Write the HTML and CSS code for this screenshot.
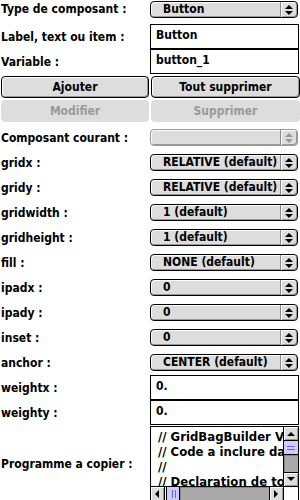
FILE: index.html
```
<!DOCTYPE html>
<html lang="fr">
<head>
	<meta charset="UTF-8">
	<title>GridBagBuilder</title>
	<link rel="stylesheet" href="styles.css">
</head>
<body>
	<div class="panel">
		<div class="row top">
			<span class="lbl">Type de composant :</span>
			<div class="popup"><span class="val">Button</span><span class="arr"></span></div>
		</div>
		<div class="row frow">
			<span class="lbl">Label, text ou item :</span>
			<div class="field">Button</div>
		</div>
		<div class="row frow">
			<span class="lbl">Variable :</span>
			<div class="field">button_1</div>
		</div>
		<div class="btns">
			<button class="btn">Ajouter</button>
			<button class="btn">Tout supprimer</button>
		</div>
		<div class="btns">
			<button class="btn" disabled>Modifier</button>
			<button class="btn" disabled>Supprimer</button>
		</div>
		<div class="row">
			<span class="lbl">Composant courant :</span>
			<div class="popup off"><span class="val"></span><span class="arr"></span></div>
		</div>
		<div class="row">
			<span class="lbl">gridx :</span>
			<div class="popup"><span class="val">RELATIVE (default)</span><span class="arr"></span></div>
		</div>
		<div class="row">
			<span class="lbl">gridy :</span>
			<div class="popup"><span class="val">RELATIVE (default)</span><span class="arr"></span></div>
		</div>
		<div class="row">
			<span class="lbl">gridwidth :</span>
			<div class="popup"><span class="val">1 (default)</span><span class="arr"></span></div>
		</div>
		<div class="row">
			<span class="lbl">gridheight :</span>
			<div class="popup"><span class="val">1 (default)</span><span class="arr"></span></div>
		</div>
		<div class="row">
			<span class="lbl">fill :</span>
			<div class="popup"><span class="val">NONE (default)</span><span class="arr"></span></div>
		</div>
		<div class="row">
			<span class="lbl">ipadx :</span>
			<div class="popup"><span class="val">0</span><span class="arr"></span></div>
		</div>
		<div class="row">
			<span class="lbl">ipady :</span>
			<div class="popup"><span class="val">0</span><span class="arr"></span></div>
		</div>
		<div class="row">
			<span class="lbl">inset :</span>
			<div class="popup"><span class="val">0</span><span class="arr"></span></div>
		</div>
		<div class="row">
			<span class="lbl">anchor :</span>
			<div class="popup"><span class="val">CENTER (default)</span><span class="arr"></span></div>
		</div>
		<div class="row frow">
			<span class="lbl">weightx :</span>
			<div class="field">0.</div>
		</div>
		<div class="row frow">
			<span class="lbl">weighty :</span>
			<div class="field">0.</div>
		</div>
		<div class="row prog">
			<span class="lbl">Programme a copier :</span>
			<div class="code">
				<div class="lines">
					<div>// GridBagBuilder V</div>
					<div>// Code a inclure da</div>
					<div>//</div>
					<div>// Declaration de to</div>
				</div>
				<div class="vbar">
					<span class="sb up"></span>
					<span class="thumb v"></span>
					<span class="track"></span>
					<span class="sb down"></span>
				</div>
				<div class="hbar">
					<span class="sb left"></span>
					<span class="thumb h"></span>
					<span class="track"></span>
					<span class="sb right"></span>
				</div>
				<div class="corner"></div>
			</div>
		</div>
	</div>
</body>
</html>
```

FILE: styles.css
```
*{
	margin: 0;
	padding: 0;
	box-sizing: border-box;
}
body{
	width: 300px;
	height: 500px;
	overflow: hidden;
	background: #fff;
	font-family: "DejaVu Sans Condensed", "DejaVu Sans", sans-serif;
	font-weight: bold;
	font-size: 12px;
	color: #000;
}
.row{
	display: grid;
	grid-template-columns: 150px 149px;
	align-items: center;
	height: 25px;
}
.lbl{
	padding-left: 1px;
	white-space: nowrap;
}
.top{
	height: 24px;
	align-items: start;
}
.top .lbl{
	line-height: 19px;
}
.top .popup{
	margin-top: 1px;
}
.frow{
	align-items: stretch;
}
.frow .lbl{
	align-self: center;
}
.field{
	border: 1px solid #000;
	background: #fff;
	padding: 3px 0 0 5px;
	line-height: 15px;
}

/* popup menus */
.popup{
	display: flex;
	height: 17px;
	width: 148px;
	border: 1px solid #000;
	border-radius: 4px;
	background: #dddddd;
	box-shadow: inset 1px 1px #fff, inset -1px -1px #999;
}
.popup .val{
	flex: 1;
	padding-left: 12px;
	line-height: 15px;
	white-space: nowrap;
	overflow: hidden;
}
.popup .arr{
	position: relative;
	width: 17px;
	border-left: 1px solid #888;
	box-shadow: inset 1px 0 #fff;
}
.popup .arr::before,
.popup .arr::after{
	content: "";
	position: absolute;
	left: 4px;
	border-left: 4px solid transparent;
	border-right: 4px solid transparent;
}
.popup .arr::before{
	top: 3px;
	border-bottom: 4px solid #000;
}
.popup .arr::after{
	top: 9px;
	border-top: 4px solid #000;
}
.popup.off{
	border-color: #999;
}
.popup.off .arr::before{
	border-bottom-color: #999;
}
.popup.off .arr::after{
	border-top-color: #999;
}

/* push buttons */
.btns{
	display: grid;
	grid-template-columns: 148px 149px;
	gap: 2px;
	padding-left: 1px;
	margin-top: 2px;
}
.btn{
	height: 22px;
	font: inherit;
	color: #000;
	background: #dddddd;
	border: 1px solid #000;
	border-radius: 4px;
	box-shadow: inset 1px 1px #fff, inset -1px -1px #999;
}
.btn:disabled{
	color: #999;
	border-color: #ddd;
	box-shadow: none;
}
.btns + .row{
	margin-top: 3px;
}

/* code area */
.prog{
	height: 76px;
	margin-top: 1px;
}
.code{
	position: relative;
	height: 76px;
	border: 1px solid #000;
	background: #fff;
	display: grid;
	grid-template-columns: 1fr 15px;
	grid-template-rows: 1fr 15px;
	overflow: hidden;
}
.lines{
	padding: 2px 0 0 7px;
	font-size: 13px;
	line-height: 15px;
	white-space: nowrap;
	overflow: hidden;
}
.vbar{
	display: flex;
	flex-direction: column;
	border-left: 1px solid #000;
}
.hbar{
	display: flex;
	border-top: 1px solid #000;
}
.corner{
	border-left: 1px solid #000;
	border-top: 1px solid #000;
}
.track{
	flex: 1;
	background: #aaaaaa;
	box-shadow: inset 1px 1px #888;
}
.sb{
	position: relative;
	flex: 0 0 14px;
	background: #dddddd;
	box-shadow: inset 1px 1px #fff, inset -1px -1px #999;
}
.vbar .sb.up{
	border-bottom: 1px solid #000;
}
.vbar .sb.down{
	border-top: 1px solid #000;
}
.hbar .sb.left{
	border-right: 1px solid #000;
}
.hbar .sb.right{
	border-left: 1px solid #000;
}
.sb::after{
	content: "";
	position: absolute;
	left: 3px;
	top: 4px;
	border: 4px solid transparent;
}
.sb.up::after{
	top: 1px;
	border-bottom-color: #000;
}
.sb.down::after{
	top: 4px;
	border-top-color: #000;
}
.sb.left::after{
	left: 0;
	top: 3px;
	border-right-color: #000;
}
.sb.right::after{
	left: 4px;
	top: 3px;
	border-left-color: #000;
}
.thumb{
	flex: 0 0 14px;
	background: #ccccff;
	border: 1px solid #000;
}
.thumb.v{
	background: #ccccff repeating-linear-gradient(#ccccff 0 2px, #6666cc 2px 3px) 3px 3px / 8px 6px no-repeat;
	border-width: 0 0 1px 0;
}
.thumb.h{
	background: #ccccff repeating-linear-gradient(90deg, #ccccff 0 2px, #6666cc 2px 3px) 3px 3px / 6px 8px no-repeat;
	border-width: 0 1px 0 1px;
	margin-left: 1px;
}
```
